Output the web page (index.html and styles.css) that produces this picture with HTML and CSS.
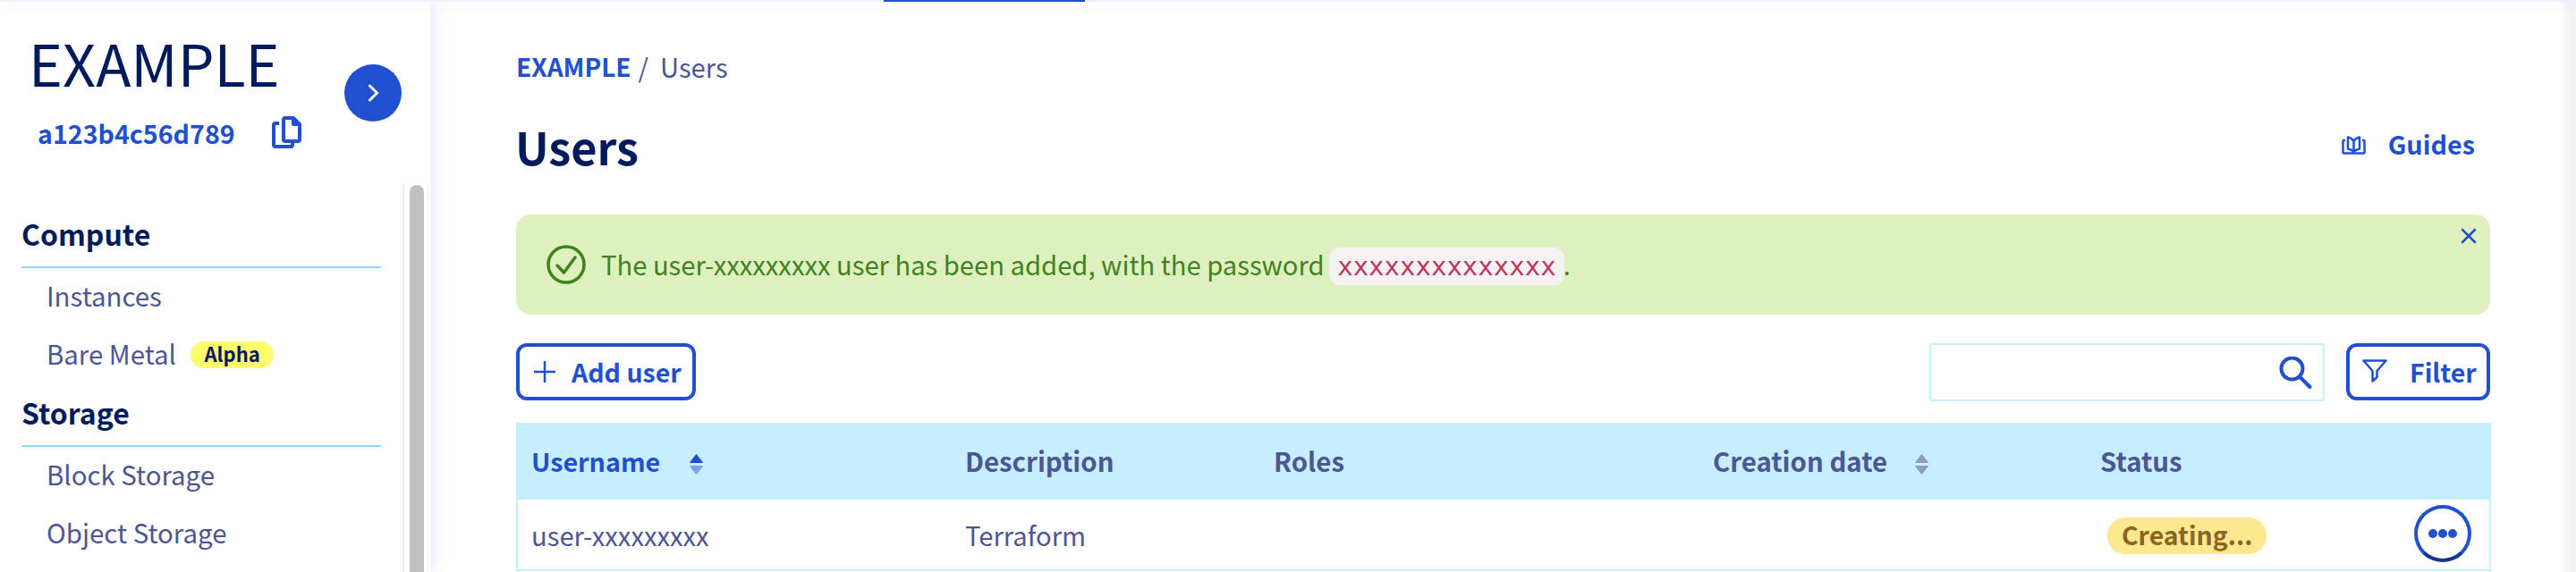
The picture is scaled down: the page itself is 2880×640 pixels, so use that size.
FILE: index.html
```html
<!DOCTYPE html>
<html lang="en">
<head>
<meta charset="utf-8">
<title>Users</title>
<link rel="stylesheet" href="styles.css">
</head>
<body>
<div class="topbar"><div class="topbar-tab"></div></div>
<div class="shell">
  <aside class="sidebar">
    <div class="side-head">
      <div class="side-id">
        <div class="project-name">EXAMPLE</div>
        <div class="project-row">
          <span class="project-id">a123b4c56d789</span>
          <svg class="copy-icon" viewBox="0 0 33 36"><path d="M15 2h9l7 7v17a2 2 0 0 1-2 2H15a2 2 0 0 1-2-2V4a2 2 0 0 1 2-2z"/><path d="M24 2v7h7"/><path d="M8 8H4a2 2 0 0 0-2 2v22a2 2 0 0 0 2 2h17a2 2 0 0 0 2-2v-2"/></svg>
        </div>
      </div>
      <button class="collapse-btn"><svg class="chevron" viewBox="0 0 14 20"><path d="M2.5 2l8 8-8 8"/></svg></button>
    </div>
    <div class="side-body">
      <nav class="side-nav">
        <div class="nav-title">Compute</div>
        <ul class="nav-list">
          <li class="nav-item">Instances</li>
          <li class="nav-item">Bare Metal <span class="badge-alpha">Alpha</span></li>
        </ul>
        <div class="nav-title">Storage</div>
        <ul class="nav-list">
          <li class="nav-item">Block Storage</li>
          <li class="nav-item">Object Storage</li>
        </ul>
      </nav>
      <div class="side-scroll"><div class="side-thumb"></div></div>
    </div>
  </aside>
  <main class="main">
    <div class="breadcrumb"><a class="crumb-link">EXAMPLE</a><span class="crumb-sep">/</span><span>Users</span></div>
    <div class="title-row">
      <h1 class="page-title">Users</h1>
      <a class="guides">
        <svg class="guides-icon" viewBox="0 0 27 21"><path d="M4 5H2.5a1 1 0 0 0-1 1v12.5a1 1 0 0 0 1 1h22a1 1 0 0 0 1-1V6a1 1 0 0 0-1-1H23"/><path d="M13.5 6C12 3.5 9.5 2 7 1.5v13c2.5.5 5 1.5 6.5 3.5 1.5-2 4-3 6.5-3.5v-13C17.5 2 15 3.5 13.5 6zM13.5 6v12"/></svg>
        <span>Guides</span>
      </a>
    </div>
    <div class="alert">
      <svg class="alert-icon" viewBox="0 0 44 44"><circle cx="22" cy="22" r="20"/><path d="M12 23l7.5 8L32 14"/></svg>
      <p class="alert-text">The user-xxxxxxxxx user has been added, with the password <code class="password">xxxxxxxxxxxxxx</code>.</p>
      <svg class="alert-close" viewBox="0 0 18 18"><path d="M2 2l14 14M16 2L2 16"/></svg>
    </div>
    <div class="toolbar">
      <button class="btn btn-add">
        <svg class="btn-plus" viewBox="0 0 24 24"><path d="M12 0v24M0 12h24"/></svg>
        <span class="btn-label">Add user</span>
      </button>
      <div class="search">
        <input class="search-input" type="text" aria-label="Search">
        <svg class="search-icon" viewBox="0 0 37 36"><circle cx="14.5" cy="13.5" r="12"/><path d="M23.5 23l11 11"/></svg>
      </div>
      <button class="btn btn-filter">
        <svg class="btn-funnel" viewBox="0 0 28 26"><path d="M1.5 1.5h25l-10 11.5v7l-5 4.5V13z"/></svg>
        <span class="btn-label">Filter</span>
      </button>
    </div>
    <table class="table">
      <colgroup>
        <col class="col-user"><col class="col-desc"><col class="col-roles"><col class="col-date"><col class="col-status"><col class="col-actions">
      </colgroup>
      <thead>
        <tr>
          <th class="th-active"><span class="th-sort">Username<svg class="sort-icon" viewBox="0 0 15 23"><path class="sort-up" d="M7.5 .5L14.5 9.5H.5z"/><path class="sort-down" d="M.5 13.5H14.5L7.5 22.5z"/></svg></span></th>
          <th>Description</th>
          <th>Roles</th>
          <th><span class="th-sort">Creation date<svg class="sort-icon sort-idle" viewBox="0 0 15 23"><path class="sort-up" d="M7.5 .5L14.5 9.5H.5z"/><path class="sort-down" d="M.5 13.5H14.5L7.5 22.5z"/></svg></span></th>
          <th>Status</th>
          <th></th>
        </tr>
      </thead>
      <tbody>
        <tr>
          <td>user-xxxxxxxxx</td>
          <td>Terraform</td>
          <td></td>
          <td></td>
          <td><span class="status">Creating...</span></td>
          <td class="td-actions"><button class="more-btn"><svg class="more-dots" viewBox="0 0 32 10"><circle cx="5" cy="5" r="5"/><circle cx="16" cy="5" r="5"/><circle cx="27" cy="5" r="5"/></svg></button></td>
        </tr>
      </tbody>
    </table>
  </main>
  <div class="page-scroll"></div>
</div>
</body>
</html>
```

FILE: styles.css
```css
* { box-sizing: border-box; }
html, body { margin: 0; padding: 0; height: 640px; overflow: hidden; background: #fff; }
body {
  font-family: "Noto Sans CJK JP", "Noto Sans", sans-serif;
  font-size: 29.2px;
  line-height: 43px;
  color: #4d5694;
}
p, h1, ul { margin: 0; padding: 0; }
button { font: inherit; background: none; padding: 0; cursor: pointer; }

/* top bar */
.topbar {
  position: relative;
  z-index: 2;
  height: 2px;
  background: #eff0f9;
  box-shadow: 0 2px 14px rgba(70, 80, 200, .14);
  padding-left: 988px;
}
.topbar-tab { width: 225px; height: 2px; background: #2050d0; }

.shell { display: flex; height: 638px; }

/* sidebar */
.sidebar {
  flex: 0 0 480px;
  display: flex;
  flex-direction: column;
  background: #fff;
  box-shadow: 4px 0 14px rgba(70, 80, 200, .12);
  position: relative;
  z-index: 1;
}
.side-head {
  height: 203px;
  flex: none;
  display: flex;
  justify-content: space-between;
  padding: 28px 32px 0 32px;
}
.project-name {
  font-size: 64.5px;
  line-height: 79px;
  color: #001a5e;
}
.project-row {
  display: flex;
  align-items: flex-start;
  margin: 18px 0 0 10px;
}
.project-id { font-size: 28.6px; font-weight: 700; color: #2050d0; }
.copy-icon {
  width: 33px;
  height: 36px;
  margin: 3px 0 0 41px;
  fill: none;
  stroke: #2050d0;
  stroke-width: 4;
  stroke-linejoin: round;
}
.collapse-btn {
  flex: none;
  width: 64px;
  height: 64px;
  margin-top: 42px;
  border: 0;
  border-radius: 50%;
  background: #2050d0;
  display: flex;
  align-items: center;
  justify-content: center;
}
.chevron {
  width: 14px;
  height: 20px;
  margin-left: 2px;
  fill: none;
  stroke: #fff;
  stroke-width: 3;
  stroke-linecap: round;
}
.side-body { flex: 1; display: flex; min-height: 0; overflow: hidden; }
.side-nav { flex: 0 0 450px; padding: 30px 24px 0; }
.nav-title {
  height: 65px;
  font-size: 32px;
  line-height: 53px;
  font-weight: 700;
  color: #001a5e;
  border-bottom: 2px solid #8fd7fb;
}
.nav-list {
  list-style: none;
  padding: 9px 0 0 28px;
  margin-bottom: -3px;
  font-size: 29.4px;
}
.nav-item {
  display: flex;
  height: 64.5px;
  white-space: pre;
}
.badge-alpha {
  height: 30px;
  margin: 8px 0 0 10px;
  padding: 0 15px;
  border-radius: 15px;
  background: #fcfc6a;
  color: #001a5e;
  font-size: 22px;
  line-height: 26px;
  font-weight: 700;
}
.side-scroll {
  flex: 0 0 28px;
  height: 100%;
  padding: 2px 4px 0 6px;
  border-left: 2px solid #eee;
  border-right: 1px solid #eee;
  margin-right: 2px;
}
.side-thumb {
  width: 16px;
  height: 100%;
  border-radius: 8px 8px 0 0;
  background: #c1c1c1;
}

/* main */
.main { flex: 1; min-width: 0; padding: 51px 77px 0 96px; }
.page-scroll {
  flex: 0 0 19px;
  background: linear-gradient(to right, #fff, #f1f1f1 70%);
}
.breadcrumb { display: flex; }
.crumb-link { font-size: 28px; font-weight: 700; color: #2050d0; }
.crumb-sep { margin: 0 13px 0 8px; }
.title-row {
  display: flex;
  justify-content: space-between;
  margin-top: 33px;
}
.page-title {
  margin-left: -1px;
  font-size: 50.4px;
  line-height: 69px;
  font-weight: 700;
  color: #001a5e;
}
.guides {
  display: flex;
  align-items: flex-start;
  margin: 10px 17px 0 0;
  font-size: 28.8px;
  font-weight: 700;
  color: #2050d0;
}
.guides-icon {
  width: 27px;
  height: 21px;
  margin: 13px 25px 0 0;
  fill: none;
  stroke: #2050d0;
  stroke-width: 2.5;
  stroke-linejoin: round;
}

/* alert */
.alert {
  display: flex;
  align-items: flex-start;
  height: 112px;
  margin-top: 42px;
  padding: 34px 15px 0 34px;
  border-radius: 16px;
  background: #dff0bf;
  color: #40821f;
}
.alert-icon {
  flex: none;
  width: 44px;
  height: 44px;
  margin-right: 17px;
  fill: none;
  stroke: #40821f;
  stroke-width: 3.5;
  stroke-linecap: round;
  stroke-linejoin: round;
}
.alert-text { white-space: nowrap; }
.password {
  display: inline-block;
  margin: 0 -1px 0 -1px;
  padding: 0 9px;
  line-height: 42px;
  border-radius: 12px;
  background: #f6f2f4;
  color: #c0345a;
  font-family: "DejaVu Sans Mono", "Liberation Mono", monospace;
  font-size: 29px;
}
.alert-close {
  flex: none;
  width: 18px;
  height: 18px;
  margin: -19px 0 0 auto;
  fill: none;
  stroke: #2050d0;
  stroke-width: 2.5;
  stroke-linecap: round;
}

/* toolbar */
.toolbar { display: flex; align-items: flex-start; margin-top: 32px; }
.btn {
  display: flex;
  align-items: center;
  height: 64px;
  border: 4px solid #2050d0;
  border-radius: 12px;
  background: #fff;
  padding-left: 16px;
  color: #2050d0;
  font-size: 28.5px;
  font-weight: 700;
}
.btn-add { width: 201px; margin-right: auto; }
.btn-filter { width: 161px; margin-left: 24px; padding-left: 14px; }
.btn-label { margin-top: -1px; white-space: nowrap; }
.btn-plus {
  width: 24px;
  height: 24px;
  margin-right: 18px;
  fill: none;
  stroke: #2050d0;
  stroke-width: 2.5;
}
.btn-funnel {
  width: 28px;
  height: 26px;
  margin: -3px 25px 0 0;
  fill: none;
  stroke: #2050d0;
  stroke-width: 2.5;
  stroke-linejoin: round;
}
.search {
  display: flex;
  align-items: center;
  width: 442px;
  height: 65px;
  border: 2px solid #c7eefe;
  border-radius: 2px;
  padding-right: 12px;
}
.search-input {
  flex: 1;
  min-width: 0;
  height: 100%;
  border: 0;
  outline: 0;
  background: none;
}
.search-icon {
  flex: none;
  width: 37px;
  height: 36px;
  fill: none;
  stroke: #2050d0;
  stroke-width: 4;
  stroke-linecap: round;
}

/* table */
.table {
  width: 100%;
  margin-top: 24px;
  table-layout: fixed;
  border-collapse: separate;
  border-spacing: 0;
}
.col-user { width: 484px; }
.col-desc { width: 345px; }
.col-roles { width: 491px; }
.col-date { width: 433px; }
.col-status { width: 351px; }
.col-actions { width: 104px; }
th {
  height: 86px;
  padding: 21px 0 0 18px;
  vertical-align: top;
  text-align: left;
  font-size: 29.4px;
  font-weight: 700;
  background: #c7eefe;
}
th.th-active { padding-left: 17px; color: #2050d0; font-size: 28.7px; }
.th-sort { display: flex; align-items: flex-start; }
.sort-icon { flex: none; width: 15px; height: 23px; margin: 14px 0 0 31px; }
.th-active .sort-icon { margin-left: 33px; }
.sort-up { fill: #2050d0; stroke: #2050d0; stroke-linejoin: round; }
.sort-down { fill: #7aa0e8; stroke: #7aa0e8; stroke-linejoin: round; }
.sort-idle .sort-up, .sort-idle .sort-down { fill: #8e9cc4; stroke: #8e9cc4; }
td {
  height: 80px;
  padding: 18px 0 0 18px;
  vertical-align: top;
  border-bottom: 2px solid #c7eefe;
}
td:first-child { border-left: 2px solid #c7eefe; padding-left: 15px; }
td:last-child { border-right: 2px solid #c7eefe; }
.status {
  display: block;
  width: fit-content;
  margin: 2px 0 0 8px;
  padding: 0 16px 4px;
  line-height: 37px;
  border-radius: 20px;
  background: #fbe88f;
  color: #8b6424;
  font-size: 28.4px;
  font-weight: 700;
  white-space: nowrap;
}
.td-actions { padding-top: 6px; }
.more-btn {
  display: flex;
  align-items: center;
  justify-content: center;
  width: 64px;
  height: 64px;
  border: 4px solid #2050d0;
  border-bottom-color: #14348f;
  border-radius: 50%;
  background: #fff;
}
.more-dots { width: 32px; height: 10px; fill: #2050d0; }
```
